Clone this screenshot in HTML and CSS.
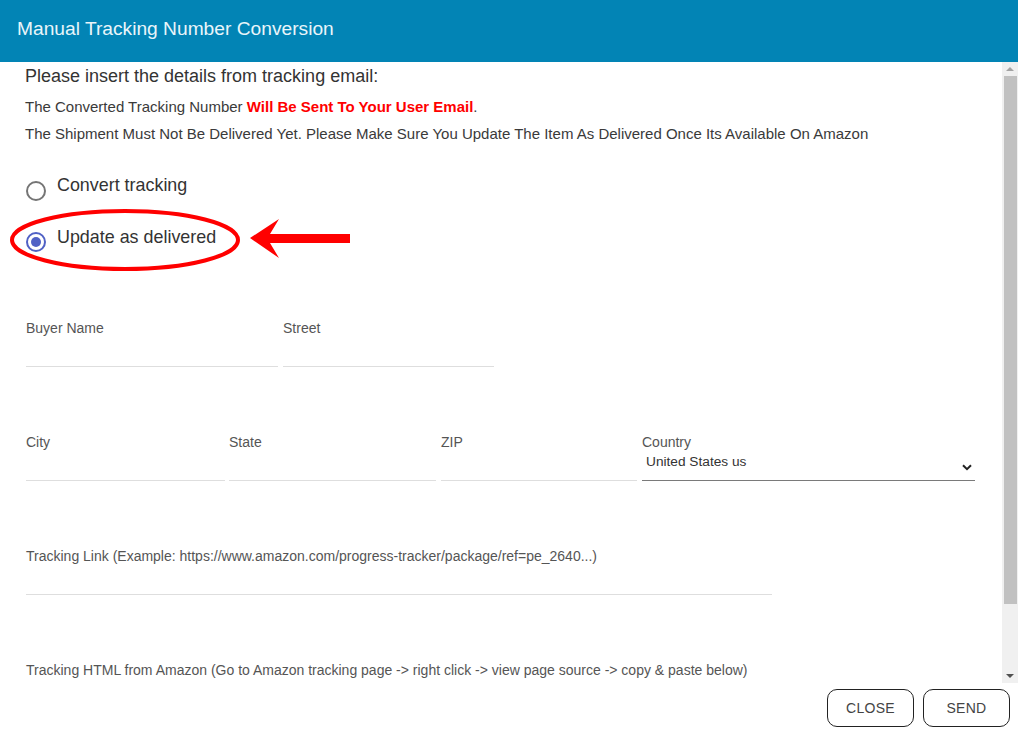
FILE: index.html
```html
<!DOCTYPE html>
<html>
<head>
<meta charset="utf-8">
<link rel="stylesheet" href="styles.css">
</head>
<body>
<div class="dialog">
  <header class="dlg-header">
    <h1 class="dlg-title">Manual Tracking Number Conversion</h1>
  </header>
  <div class="dlg-main">
    <div class="dlg-content">
      <p class="intro">Please insert the details from tracking email:</p>
      <p class="note first">The Converted Tracking Number <strong class="warn">Will Be Sent To Your User Email</strong>.</p>
      <p class="note">The Shipment Must Not Be Delivered Yet. Please Make Sure You Update The Item As Delivered Once Its Available On Amazon</p>

      <div class="radios">
        <label class="radio"><span class="radio-dot"></span><span class="radio-text">Convert tracking</span></label>
        <label class="radio checked"><span class="radio-dot"></span><span class="radio-text">Update as delivered</span>
          <svg class="annot" width="350" height="72" viewBox="0 0 350 72">
            <ellipse cx="117" cy="35" rx="113" ry="29" fill="none" stroke="#f00" stroke-width="4"/>
            <polygon points="242,33 271,14 262,29 342,29 342,38 262,38 271,53" fill="#f00"/>
          </svg>
        </label>
      </div>

      <div class="row row-first">
        <div class="field w-buyer"><span class="flabel">Buyer Name</span><div class="finput"></div></div>
        <div class="field w-street"><span class="flabel">Street</span><div class="finput"></div></div>
      </div>

      <div class="row">
        <div class="field w-city"><span class="flabel">City</span><div class="finput"></div></div>
        <div class="field w-state"><span class="flabel">State</span><div class="finput"></div></div>
        <div class="field w-zip"><span class="flabel">ZIP</span><div class="finput"></div></div>
        <div class="field w-country"><span class="flabel">Country</span>
          <div class="fselect"><span class="sel-value">United States us</span>
            <svg class="chev" width="10" height="7" viewBox="0 0 10 7"><path d="M1 1.2 L5 5.2 L9 1.2" fill="none" stroke="#222" stroke-width="2"/></svg>
          </div>
        </div>
      </div>

      <div class="row">
        <div class="field w-link"><span class="flabel">Tracking Link (Example: https://www.amazon.com/progress-tracker/package/ref=pe_2640...)</span><div class="finput"></div></div>
      </div>

      <div class="row">
        <div class="field w-link"><span class="flabel">Tracking HTML from Amazon (Go to Amazon tracking page -&gt; right click -&gt; view page source -&gt; copy &amp; paste below)</span></div>
      </div>
    </div>
    <div class="scrollbar">
      <div class="sb-btn"><svg width="8" height="5" viewBox="0 0 8 5"><polygon points="4,0 8,4 0,4" fill="#a3a3a3"/></svg></div>
      <div class="sb-track"><div class="sb-thumb"></div></div>
      <div class="sb-btn"><svg width="8" height="5" viewBox="0 0 8 5"><polygon points="0,0 8,0 4,4" fill="#505050"/></svg></div>
    </div>
  </div>
  <footer class="dlg-footer">
    <button class="btn">CLOSE</button>
    <button class="btn">SEND</button>
  </footer>
</div>
</body>
</html>
```

FILE: styles.css
```css
* { box-sizing: border-box; }
html, body { margin: 0; padding: 0; }
body {
  width: 1018px;
  height: 733px;
  overflow: hidden;
  font-family: "Liberation Sans", Arial, sans-serif;
  color: #333;
  background: #fff;
}
.dialog {
  display: flex;
  flex-direction: column;
  height: 733px;
}
.dlg-header {
  height: 62px;
  background: #0284b5;
  display: flex;
  align-items: center;
  padding: 0 17px;
  flex: none;
}
.dlg-title {
  margin: 0;
  font-weight: normal;
  font-size: 19.2px;
  color: #e9f5fa;
  position: relative;
  top: -2px;
}
.dlg-main {
  display: flex;
  height: 621px;
  flex: none;
  overflow: hidden;
}
.dlg-content {
  flex: 1;
  padding: 4px 0 0 25px;
  overflow: hidden;
}
.intro {
  margin: 0;
  font-size: 18px;
  line-height: 20px;
  color: #333;
}
.note {
  margin: 0;
  font-size: 15px;
  line-height: 27px;
  color: #3a3a3a;
}
.note.first { margin-top: 7px; }
.warn { color: #f00; font-weight: bold; }
.radios {
  margin-top: 28px;
  display: flex;
  flex-direction: column;
  gap: 30px;
}
.radio {
  display: flex;
  align-items: flex-start;
  position: relative;
  height: 22px;
}
.radio-dot {
  width: 20px;
  height: 20px;
  border: 2px solid #757575;
  border-radius: 50%;
  margin: 6px 11px 0 1px;
  flex: none;
  position: relative;
}
.radio.checked .radio-dot { border-color: #5061c5; margin-top: 5px; }
.radio.checked .radio-dot::after {
  content: "";
  position: absolute;
  left: 3px; top: 3px;
  width: 10px; height: 10px;
  border-radius: 50%;
  background: #5061c5;
}
.radio-text {
  font-size: 17.9px;
  line-height: 20px;
  color: #333;
}
.annot {
  position: absolute;
  left: -17px;
  top: -22px;
}
.row {
  display: flex;
  gap: 5px;
  margin-top: 68px;
}
.row.row-first { margin-top: 72px; }
.field { display: flex; flex-direction: column; flex: none; }
.flabel {
  font-size: 14px;
  line-height: 14px;
  color: #555;
  white-space: nowrap;
}
.finput {
  height: 32px;
  border-bottom: 1px solid #dedede;
}
.w-buyer { width: 252px; margin-left: 1px; }
.w-street { width: 211px; }
.w-city { width: 199px; margin-left: 1px; }
.w-state { width: 207px; margin-left: -1px; }
.w-zip { width: 196px; }
.w-country { width: 333px; }
.w-link { width: 746px; margin-left: 1px; }
.fselect {
  height: 32px;
  border-bottom: 1px solid #7a7a7a;
  display: flex;
  align-items: flex-start;
  justify-content: space-between;
  padding: 6px 3px 0 4px;
}
.sel-value { font-size: 13.7px; color: #333; line-height: 14px; }
.chev { margin-top: 9px; }
.scrollbar {
  width: 16px;
  flex: none;
  background: #f0f0f0;
  display: flex;
  flex-direction: column;
}
.sb-btn {
  height: 14px;
  display: flex;
  align-items: center;
  justify-content: center;
}
.sb-track { flex: 1; padding: 0 1px 0 2px; }
.sb-thumb {
  height: 528px;
  background: #c1c1c1;
}
.dlg-footer {
  flex: 1;
  display: flex;
  justify-content: flex-end;
  gap: 9px;
  padding: 6px 8px 0 0;
}
.btn {
  width: 87px;
  height: 38px;
  border: 1px solid #222;
  border-radius: 10px;
  background: #fff;
  font-family: "Liberation Sans", Arial, sans-serif;
  font-size: 14px;
  color: #444;
  letter-spacing: 0.3px;
  padding: 0;
}
```
